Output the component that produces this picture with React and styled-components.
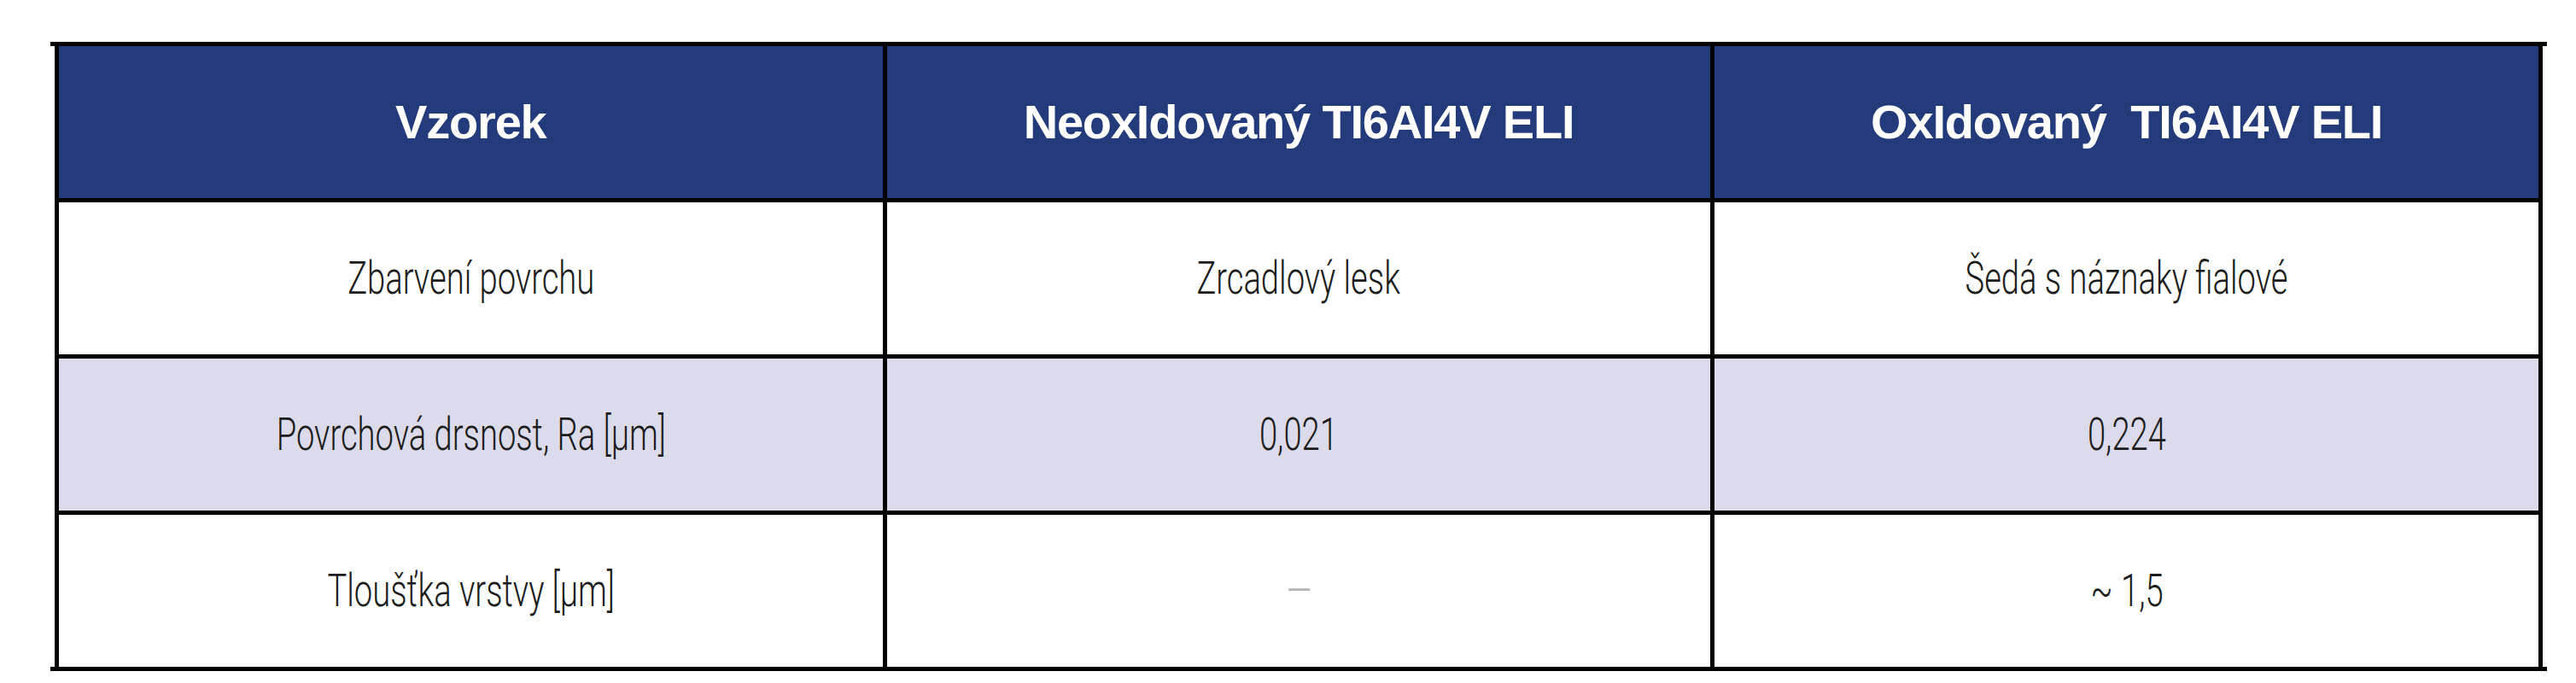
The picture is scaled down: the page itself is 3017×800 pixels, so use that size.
import React from "react";
import styled, { createGlobalStyle } from "styled-components";

const GlobalStyle = createGlobalStyle`
  body {
    margin: 0;
    background: #fff;
    font-family: "Liberation Sans", Arial, sans-serif;
  }
`;

const columns = ["Vzorek", "NeoxIdovaný TI6AI4V ELI", "OxIdovaný\u00a0 TI6AI4V ELI"];

const rows = [
  ["Zbarvení povrchu", "Zrcadlový lesk", "Šedá s náznaky fialové"],
  ["Povrchová drsnost, Ra [µm]", "0,021", "0,224"],
  ["Tloušťka vrstvy [µm]", "—", "~ 1,5"],
];

const Page = styled.div`
  padding: 49px 0 20px 59px;
`;

const Frame = styled.div`
  box-sizing: border-box;
  width: 2924px;
  padding: 0 5px;
  border-top: 5px solid #000;
  border-bottom: 5px solid #000;
`;

const Grid = styled.div`
  display: grid;
  grid-template-columns: repeat(3, 1fr);
  gap: 5px;
  background: #000;
  border-left: 5px solid #000;
  border-right: 5px solid #000;
`;

const Cell = styled.div`
  height: 178px;
  display: flex;
  align-items: center;
  justify-content: center;
  background: ${(p) => (p.$head ? "#233a7b" : p.$shade ? "#dcdbeb" : "#fff")};
`;

const HeadText = styled.span`
  color: #fff;
  font-size: 56px;
  font-weight: 700;
  line-height: 1;
  letter-spacing: -1.2px;
  white-space: pre;
`;

const BodyText = styled.span`
  display: inline-block;
  color: ${(p) => (p.$muted ? "#b4b4b4" : "#1c1c1c")};
  font-family: Roboto, "Liberation Sans", sans-serif;
  font-weight: 300;
  font-size: 53px;
  line-height: 1;
  white-space: pre;
  transform: scaleX(0.72);
`;

export default function App() {
  return (
    <>
      <GlobalStyle />
      <Page>
        <Frame>
          <Grid>
            {columns.map((c) => (
              <Cell key={c} $head>
                <HeadText>{c}</HeadText>
              </Cell>
            ))}
            {rows.map((row, i) =>
              row.map((v, j) => (
                <Cell key={`${i}-${j}`} $shade={i === 1}>
                  <BodyText $muted={v === "—"}>{v}</BodyText>
                </Cell>
              ))
            )}
          </Grid>
        </Frame>
      </Page>
    </>
  );
}
